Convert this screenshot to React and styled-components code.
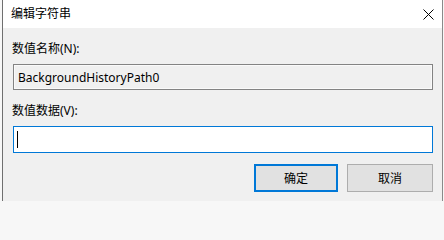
import React from "react";
import styled, { createGlobalStyle } from "styled-components";

const Global = createGlobalStyle`
  html, body { margin: 0; padding: 0; background: #f7f7f7; }
  body { width: 444px; height: 201px; overflow: hidden; }
  * { box-sizing: border-box; }
`;

const FONT = `"Noto Sans", "Noto Sans CJK SC", sans-serif`;

const Page = styled.div`
  display: flex;
  width: 444px;
  height: 201px;
  padding-left: 2px;
  background: #f7f7f7;
`;

const Dialog = styled.div`
  width: 441px;
  height: 201px;
  border-left: 1px solid #6f6f6f;
  border-right: 1px solid #8a8a8a;
  display: flex;
  flex-direction: column;
  font-family: ${FONT};
  color: #000;
`;

const TitleBar = styled.div`
  height: 28px;
  background: #fff;
  display: flex;
  align-items: center;
  justify-content: space-between;
  padding: 0 7px 1px 8px;
`;

const Title = styled.div`
  font-size: 12px;
  line-height: 16px;
`;

const CloseBtn = styled.div`
  width: 14px;
  height: 14px;
  display: flex;
  align-items: center;
  justify-content: center;
  margin-top: 1px;
`;

const Body = styled.div`
  flex: 1;
  background: #f0f0f0;
  display: flex;
  flex-direction: column;
  padding: 13px 8px 0 10px;
`;

const Label = styled.div`
  font-size: 12px;
  line-height: 16px;
  margin-left: -1px;
  margin-top: ${(p) => p.$top || 0}px;
`;

const Field = styled.div`
  height: ${(p) => p.$h}px;
  margin-top: ${(p) => p.$top}px;
  width: 420px;
  display: flex;
  align-items: center;
  padding-left: 4px;
  font-size: 12px;
  background: ${(p) => (p.$active ? "#fff" : "#f0f0f0")};
  border: 1px solid ${(p) => (p.$active ? "#0078d7" : "#838383")};
  box-shadow: ${(p) => (p.$active ? "none" : "inset 0 0 0 1px #fafafa")};
`;

const Caret = styled.span`
  width: 1px;
  height: 17px;
  background: #000;
  margin-left: -1px;
`;

const Buttons = styled.div`
  display: flex;
  justify-content: flex-end;
  gap: 9px;
  margin-top: 11px;
  width: 420px;
`;

const Button = styled.div`
  width: ${(p) => p.$w}px;
  height: 28px;
  display: flex;
  align-items: center;
  justify-content: center;
  font-size: 12px;
  background: #e1e1e1;
  border: ${(p) => (p.$primary ? "2px solid #0078d7" : "1px solid #adadad")};
`;

export default function App() {
  return (
    <>
      <Global />
      <Page>
        <Dialog>
          <TitleBar>
            <Title>编辑字符串</Title>
            <CloseBtn>
              <svg width="11" height="11" viewBox="0 0 11 11">
                <path d="M0.5 0.5 L10.5 10.5 M10.5 0.5 L0.5 10.5" stroke="#000" strokeWidth="1" fill="none" />
              </svg>
            </CloseBtn>
          </TitleBar>
          <Body>
            <Label>数值名称(N):</Label>
            <Field $h={26} $top={7}>BackgroundHistoryPath0</Field>
            <Label $top={13}>数值数据(V):</Label>
            <Field $h={27} $top={7} $active>
              <Caret />
            </Field>
            <Buttons>
              <Button $w={84} $primary>确定</Button>
              <Button $w={86}>取消</Button>
            </Buttons>
          </Body>
        </Dialog>
      </Page>
    </>
  );
}
